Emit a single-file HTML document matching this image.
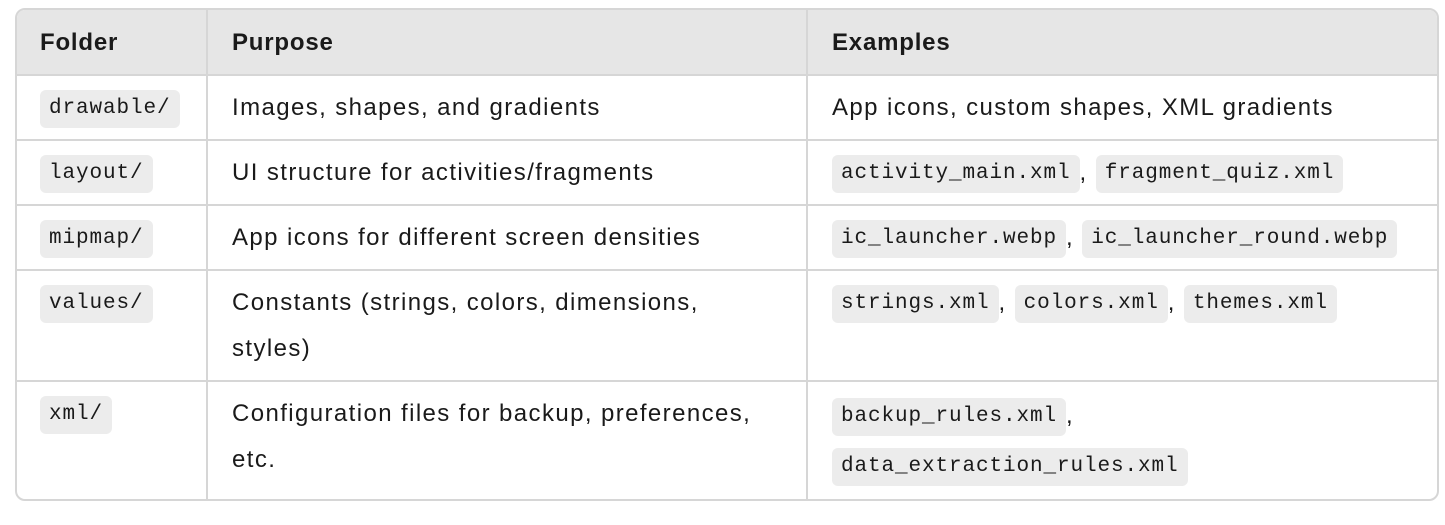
<!DOCTYPE html>
<html><head><meta charset="utf-8"><style>
html,body{margin:0;padding:0;background:#fff;width:1445px;height:525px;overflow:hidden}
.wrap{position:absolute;left:15px;top:8px;width:1420px;border:2px solid #d6d6d6;border-radius:10px;overflow:hidden}
table{border-collapse:collapse;width:1420px;table-layout:fixed;font-family:"Liberation Sans",sans-serif;font-size:24px;letter-spacing:1.4px;color:#1a1a1a}
th,td{border:2px solid #d6d6d6;text-align:left;padding:9px 24px 8px 24px;line-height:46px;vertical-align:top}
tr:first-child th{border-top:none}
th:first-child,td:first-child{border-left:none}
th:last-child,td:last-child{border-right:none}
tr:last-child td{border-bottom:none}
th{background:#e6e6e6;font-weight:bold;padding-top:10px;padding-bottom:8px;letter-spacing:0.8px}
td:first-child,th:first-child{padding-left:23px}
code{font-family:"Liberation Mono",monospace;font-size:21px;letter-spacing:0.9px;background:#ececec;border-radius:6px;padding:0 9px;display:inline-block;line-height:38px;vertical-align:middle}
td.x{line-height:50px}
</style></head><body>
<div class="wrap"><table>
<colgroup><col style="width:190px"><col style="width:600px"><col></colgroup>
<tr><th>Folder</th><th>Purpose</th><th>Examples</th></tr>
<tr><td><code>drawable/</code></td><td>Images, shapes, and gradients</td><td>App icons, custom shapes, XML gradients</td></tr>
<tr><td><code>layout/</code></td><td>UI structure for activities/fragments</td><td><code>activity_main.xml</code>, <code>fragment_quiz.xml</code></td></tr>
<tr><td><code>mipmap/</code></td><td>App icons for different screen densities</td><td><code>ic_launcher.webp</code>, <code>ic_launcher_round.webp</code></td></tr>
<tr><td><code>values/</code></td><td>Constants (strings, colors, dimensions,<br>styles)</td><td><code>strings.xml</code>, <code>colors.xml</code>, <code>themes.xml</code></td></tr>
<tr><td><code>xml/</code></td><td>Configuration files for backup, preferences,<br>etc.</td><td class="x"><code>backup_rules.xml</code>,<br><code>data_extraction_rules.xml</code></td></tr>
</table></div>
</body></html>
